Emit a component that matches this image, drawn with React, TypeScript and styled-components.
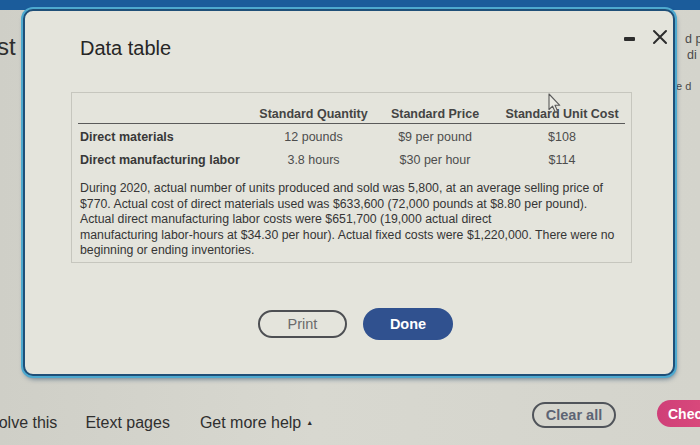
import React from "react";
import styled, { createGlobalStyle } from "styled-components";

const Global = createGlobalStyle`
  html, body { margin: 0; padding: 0; }
  body {
    width: 700px;
    height: 445px;
    overflow: hidden;
    background: #d4d4cc;
    font-family: "Liberation Sans", Arial, sans-serif;
  }
  * { box-sizing: border-box; }
`;

const Page = styled.div`
  position: relative;
  width: 700px;
  height: 445px;
  overflow: hidden;
  display: flex;
  flex-direction: column;
  background: linear-gradient(90deg, #cfcfc7 0%, #d8d8d0 45%, #d4d4cc 100%);
`;

const TopBar = styled.div`
  flex: none;
  height: 10px;
  background: #1b5c9b;
`;

const Main = styled.div`
  flex: 1;
  display: flex;
  justify-content: space-between;
`;

const LeftPeek = styled.div`
  margin-left: -3px;
  padding-top: 22px;
  font-size: 24px;
  line-height: 30px;
  color: #2e2e2e;
`;

const RightPeek = styled.div`
  width: 26px;
  padding-top: 21px;
  display: flex;
  flex-direction: column;
  font-size: 12.5px;
  line-height: 16px;
  color: #4a4a4a;
`;

const PeekLine = styled.span<{ $indent: number; $gap?: number; $size?: number }>`
  margin-left: ${(p) => p.$indent}px;
  margin-top: ${(p) => p.$gap ?? 0}px;
  font-size: ${(p) => p.$size ?? 12.5}px;
  white-space: nowrap;
`;

const Footer = styled.footer`
  flex: none;
  height: 60px;
  display: flex;
  align-items: center;
  overflow: hidden;
`;

const FooterLink = styled.span<{ $shift?: number }>`
  margin-left: ${(p) => p.$shift ?? 0}px;
  margin-top: 16px;
  font-size: 16px;
  color: #2f2f2f;
  white-space: nowrap;
`;

const Caret = styled.span`
  font-size: 7px;
  vertical-align: 3px;
  margin-left: 5px;
`;

const Spacer = styled.div`
  flex: 1;
`;

const ClearButton = styled.button`
  flex: none;
  width: 84px;
  height: 26px;
  border: 2px solid #50545a;
  border-radius: 14px;
  background: transparent;
  font-family: inherit;
  font-size: 14.5px;
  font-weight: bold;
  color: #5d6474;
  padding: 0;
  margin-right: 41px;
`;

const CheckButton = styled.button`
  flex: none;
  width: 80px;
  height: 27px;
  border: none;
  border-radius: 14px;
  background: linear-gradient(90deg, #cf3f78, #e0507e);
  font-family: inherit;
  font-size: 14px;
  font-weight: bold;
  color: #fff;
  text-align: left;
  padding: 0 0 0 11px;
  margin-top: -3px;
  margin-right: -37px;
`;

const Dialog = styled.section`
  position: absolute;
  left: 23px;
  top: 9px;
  width: 652px;
  height: 367px;
  background: #e4e4dc;
  border: 2px solid #1f4f78;
  border-radius: 10px;
  box-shadow: 0 0 0 2px #4ea9cf, 1px 3px 5px rgba(10, 50, 90, 0.55);
  display: flex;
  flex-direction: column;
  padding: 25px 5px 0 46px;
`;

const Header = styled.header`
  display: flex;
  align-items: flex-start;
  height: 24px;
`;

const Title = styled.h2`
  margin: 0;
  padding-left: 9px;
  font-size: 20px;
  line-height: 24px;
  font-weight: normal;
  color: #262626;
  flex: 1;
`;

const Controls = styled.div`
  display: flex;
  align-items: center;
  gap: 17px;
  margin-top: -7px;
`;

const Minimize = styled.span`
  width: 11px;
  height: 4px;
  border-radius: 1px;
  background: #2d2d2d;
  margin-top: 3px;
`;

const Panel = styled.div`
  margin-top: 32px;
  width: 561px;
  border: 1px solid #c6c6be;
  padding: 12px 6px 3px 6px;
`;

const Grid = styled.div`
  display: grid;
  grid-template-columns: 178px 115px 128px 126px;
  font-size: 12.5px;
  color: #3c3c3c;
`;

const HeadCell = styled.div`
  height: 19px;
  line-height: 18px;
  border-bottom: 1px solid #5a5a5a;
  text-align: center;
  font-weight: bold;
  color: #444;
  white-space: nowrap;
`;

const Cell = styled.div<{ $label?: boolean; $first?: boolean }>`
  height: 23px;
  line-height: 23px;
  margin-top: ${(p) => (p.$first ? 2 : 0)}px;
  padding-left: ${(p) => (p.$label ? 2 : 0)}px;
  text-align: ${(p) => (p.$label ? "left" : "center")};
  font-weight: ${(p) => (p.$label ? "bold" : "normal")};
  color: ${(p) => (p.$label ? "#383838" : "#4d4d4d")};
  white-space: nowrap;
`;

const Paragraph = styled.p`
  margin: 9px 0 0 0;
  padding-left: 2px;
  font-size: 12.3px;
  line-height: 15.5px;
  color: #353535;
  white-space: nowrap;
`;

const ButtonRow = styled.div`
  margin-top: 47px;
  width: 561px;
  padding-left: 8px;
  display: flex;
  justify-content: center;
  gap: 16px;
`;

const PillButton = styled.button<{ $primary?: boolean }>`
  width: ${(p) => (p.$primary ? 90 : 89)}px;
  height: ${(p) => (p.$primary ? 32 : 28)}px;
  margin-top: ${(p) => (p.$primary ? -2 : 0)}px;
  border-radius: 16px;
  border: ${(p) => (p.$primary ? "none" : "2px solid #4d4f53")};
  background: ${(p) => (p.$primary ? "#30518f" : "transparent")};
  color: ${(p) => (p.$primary ? "#ffffff" : "#6b6b6b")};
  font-family: inherit;
  font-size: 14.5px;
  font-weight: ${(p) => (p.$primary ? "bold" : "normal")};
  padding: 0;
`;

const Cursor = styled.svg`
  position: absolute;
  left: 548px;
  top: 93px;
`;

const rows = [
  { label: "Direct materials", qty: "12 pounds", price: "$9 per pound", cost: "$108" },
  { label: "Direct manufacturing labor", qty: "3.8 hours", price: "$30 per hour", cost: "$114" },
];

export default function App() {
  return (
    <>
      <Global />
      <Page>
        <TopBar />
        <Main>
          <LeftPeek>st</LeftPeek>
          <RightPeek>
            <PeekLine $indent={11}>d p</PeekLine>
            <PeekLine $indent={13}>di</PeekLine>
            <PeekLine $indent={2} $gap={15} $size={11}>e d</PeekLine>
          </RightPeek>
        </Main>
        <Footer>
          <FooterLink $shift={-12}>Solve this</FooterLink>
          <FooterLink $shift={28}>Etext pages</FooterLink>
          <FooterLink $shift={30}>
            Get more help<Caret>▲</Caret>
          </FooterLink>
          <Spacer />
          <ClearButton>Clear all</ClearButton>
          <CheckButton>Check</CheckButton>
        </Footer>

        <Dialog>
          <Header>
            <Title>Data table</Title>
            <Controls>
              <Minimize />
              <svg width="16" height="16" viewBox="0 0 16 16">
                <path d="M2 2 L14 14 M14 2 L2 14" stroke="#2d2d2d" strokeWidth="2" strokeLinecap="round" />
              </svg>
            </Controls>
          </Header>
          <Panel>
            <Grid>
              <HeadCell />
              <HeadCell>Standard Quantity</HeadCell>
              <HeadCell>Standard Price</HeadCell>
              <HeadCell>Standard Unit Cost</HeadCell>
              {rows.map((r, i) => (
                <React.Fragment key={r.label}>
                  <Cell $label $first={i === 0}>{r.label}</Cell>
                  <Cell $first={i === 0}>{r.qty}</Cell>
                  <Cell $first={i === 0}>{r.price}</Cell>
                  <Cell $first={i === 0}>{r.cost}</Cell>
                </React.Fragment>
              ))}
            </Grid>
            <Paragraph>
              During 2020, actual number of units produced and sold was 5,800, at an average selling price of
              <br />
              $770. Actual cost of direct materials used was $633,600 (72,000 pounds at $8.80 per pound).
              <br />
              Actual direct manufacturing labor costs were $651,700 (19,000 actual direct
              <br />
              manufacturing labor-hours at $34.30 per hour). Actual fixed costs were $1,220,000. There were no
              <br />
              beginning or ending inventories.
            </Paragraph>
          </Panel>
          <ButtonRow>
            <PillButton>Print</PillButton>
            <PillButton $primary>Done</PillButton>
          </ButtonRow>
        </Dialog>

        <Cursor width="14" height="21" viewBox="0 0 14 21">
          <path
            d="M1 1 L1 16.5 L4.6 13.2 L7.3 19.2 L9.6 18.2 L7 12.3 L11.8 12.3 Z"
            fill="rgba(235,235,228,0.85)"
            stroke="#5a5a5a"
            strokeWidth="1.1"
            strokeLinejoin="round"
          />
        </Cursor>
      </Page>
    </>
  );
}
